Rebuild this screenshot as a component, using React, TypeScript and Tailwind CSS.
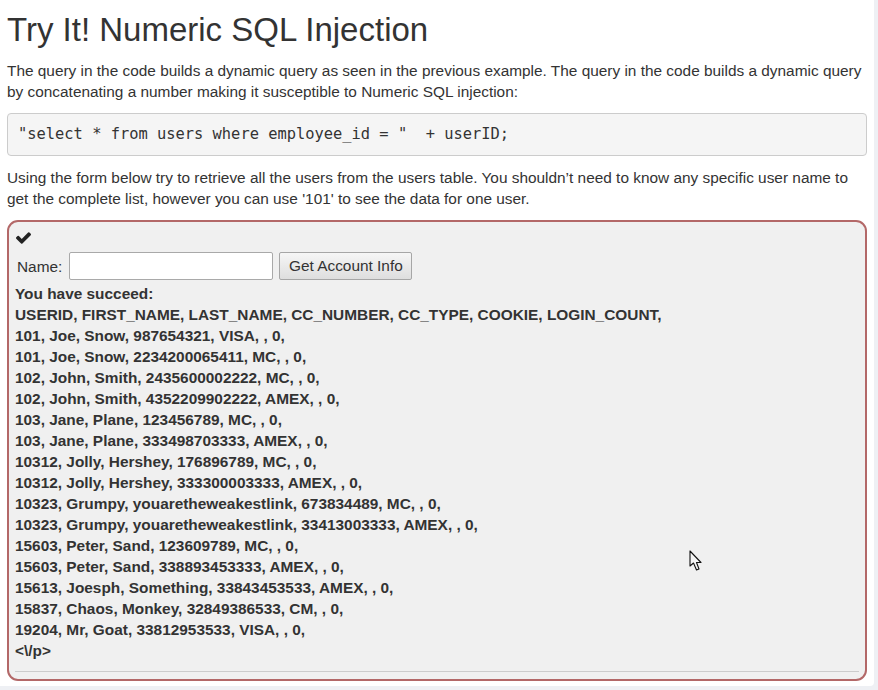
import React from "react";

const rows = [
  "You have succeed:",
  "USERID, FIRST_NAME, LAST_NAME, CC_NUMBER, CC_TYPE, COOKIE, LOGIN_COUNT,",
  "101, Joe, Snow, 987654321, VISA, , 0,",
  "101, Joe, Snow, 2234200065411, MC, , 0,",
  "102, John, Smith, 2435600002222, MC, , 0,",
  "102, John, Smith, 4352209902222, AMEX, , 0,",
  "103, Jane, Plane, 123456789, MC, , 0,",
  "103, Jane, Plane, 333498703333, AMEX, , 0,",
  "10312, Jolly, Hershey, 176896789, MC, , 0,",
  "10312, Jolly, Hershey, 333300003333, AMEX, , 0,",
  "10323, Grumpy, youaretheweakestlink, 673834489, MC, , 0,",
  "10323, Grumpy, youaretheweakestlink, 33413003333, AMEX, , 0,",
  "15603, Peter, Sand, 123609789, MC, , 0,",
  "15603, Peter, Sand, 338893453333, AMEX, , 0,",
  "15613, Joesph, Something, 33843453533, AMEX, , 0,",
  "15837, Chaos, Monkey, 32849386533, CM, , 0,",
  "19204, Mr, Goat, 33812953533, VISA, , 0,",
  "<\\/p>",
];

function CheckIcon() {
  return (
    <svg width="15" height="12" viewBox="0 0 1550 1188" className="block">
      <path
        fill="#222"
        d="M1550 232q0 40-28 68l-724 724-136 136q-28 28-68 28t-68-28l-136-136-362-362q-28-28-28-68t28-68l136-136q28-28 68-28t68 28l294 295 656-657q28-28 68-28t68 28l136 136q28 28 28 68z"
      />
    </svg>
  );
}

function Cursor() {
  return (
    <svg width="14" height="22" viewBox="0 0 14 22" className="absolute left-[689px] top-[550px]">
      <path d="M1 1 L1 16 L4.5 13 L7.5 20 L10 19 L7.5 12.5 L12 12.5 Z" fill="#f4f4f4" stroke="#111" strokeWidth="1.1" strokeLinejoin="round" />
    </svg>
  );
}

export default function App() {
  return (
    <div className="relative w-[878px] h-[690px] bg-[#eef0f4] overflow-hidden font-['Liberation_Sans',Arial,sans-serif] text-[#333]">
      <div className="w-[874px] h-[686px] bg-white rounded-br-[4px] pl-[7px] pr-[7px] pt-[12px]">
        <h1 className="text-[33px] leading-[1.1] font-normal text-[#333]">Try It! Numeric SQL Injection</h1>
        <p className="mt-[12px] text-[15.4px] leading-[21px]">
          The query in the code builds a dynamic query as seen in the previous example. The query in the code builds a dynamic query by concatenating a number making it susceptible to Numeric SQL injection:
        </p>
        <pre className="mt-[11px] w-[860px] h-[43px] overflow-visible bg-[#f5f5f5] border border-[#ccc] rounded-[4px] px-[10px] pt-[9px] pb-[9px] font-['DejaVu_Sans_Mono',monospace] text-[15.4px] leading-[23px] text-[#333]">
          {'"select * from users where employee_id = "  + userID;'}
        </pre>
        <p className="mt-[11px] text-[15.4px] leading-[21px]">
          Using the form below try to retrieve all the users from the users table. You shouldn’t need to know any specific user name to get the complete list, however you can use '101' to see the data for one user.
        </p>
        <div className="mt-[11px] w-[860px] h-[461px] border-2 border-[#b36868] rounded-[11px] bg-[#f0f0f0] px-[6px] pt-[5px]">
          <div className="h-[21px] flex items-center pl-[1px]">
            <CheckIcon />
          </div>
          <div className="mt-[4px] flex items-center h-[28px] text-[15.4px]">
            <span className="ml-[2px] mr-[7px]">Name:</span>
            <input className="w-[204px] h-[28px] bg-white border border-[#a9a9a9] rounded-[2px] outline-none" />
            <button className="ml-[6px] w-[133px] h-[28px] border border-[#a6a6a6] rounded-[2px] bg-gradient-to-b from-[#f6f6f6] to-[#dedede] text-[15.4px] leading-[20px] text-[#333]">
              Get Account Info
            </button>
          </div>
          <div className="mt-[3px] font-bold text-[15.4px] leading-[21px]">
            {rows.map((r, i) => (
              <div key={i} className="whitespace-pre">{r}</div>
            ))}
          </div>
          <hr className="mt-[10px] border-0 border-t border-[#cccccc]" />
        </div>
      </div>
      <Cursor />
    </div>
  );
}
